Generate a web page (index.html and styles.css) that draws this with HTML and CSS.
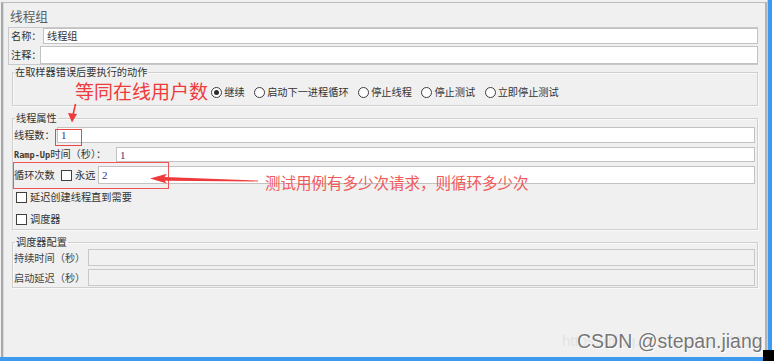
FILE: index.html
```html
<!DOCTYPE html>
<html lang="zh">
<head>
<meta charset="utf-8">
<title>线程组</title>
<link rel="stylesheet" href="styles.css">
</head>
<body>
<div class="screen">
  <div class="main">
    <div class="window">
      <div class="title">线程组</div>
      <div class="namepanel">
        <div class="row name-row"><span class="lbl lbl-name">名称：</span><div class="input in-name">线程组</div></div>
        <div class="row notes-row"><span class="lbl lbl-notes">注释：</span><div class="input in-notes"></div></div>
      </div>
      <fieldset class="fs fs-action">
        <legend>在取样器错误后要执行的动作</legend>
        <div class="radios">
          <span class="opt"><span class="radio on"></span><span class="olbl">继续</span></span>
          <span class="opt"><span class="radio"></span><span class="olbl">启动下一进程循环</span></span>
          <span class="opt"><span class="radio"></span><span class="olbl">停止线程</span></span>
          <span class="opt"><span class="radio"></span><span class="olbl">停止测试</span></span>
          <span class="opt"><span class="radio"></span><span class="olbl">立即停止测试</span></span>
        </div>
      </fieldset>
      <fieldset class="fs fs-thread">
        <legend>线程属性</legend>
        <div class="row r-threads"><span class="lbl lbl-threads">线程数：</span><div class="input"><span class="val">1</span></div></div>
        <div class="row r-ramp"><span class="lbl lbl-ramp"><span class="latin">Ramp-Up</span>时间（秒）：</span><div class="input"><span class="val">1</span></div></div>
        <div class="row r-loop"><span class="lbl lbl-loop">循环次数</span><span class="check"></span><span class="lbl lbl-forever">永远</span><div class="input"><span class="val">2</span></div></div>
        <div class="crow cr-delay"><span class="check"></span><span class="lbl">延迟创建线程直到需要</span></div>
        <div class="crow cr-sched"><span class="check"></span><span class="lbl">调度器</span></div>
      </fieldset>
      <fieldset class="fs fs-sched">
        <legend>调度器配置</legend>
        <div class="row r-dur"><span class="lbl lbl-sched">持续时间（秒）</span><div class="input disabled"></div></div>
        <div class="row r-delay"><span class="lbl lbl-sched">启动延迟（秒）</span><div class="input disabled"></div></div>
      </fieldset>
    </div>
    <div class="edge-gap"></div>
    <div class="edge-blue"></div>
    <div class="edge-white"></div>
  </div>
  <div class="bottom-bar"></div>

  <div class="note note-users">等同在线用户数</div>
  <svg class="arrows" width="774" height="361" viewBox="0 0 774 361">
    <line x1="75.5" y1="104" x2="73" y2="115" stroke="#ee3a3a" stroke-width="1.6"/>
    <polygon points="68,113 77,114 72,122.5" fill="#ee3a3a"/>
    <rect x="55.5" y="129.5" width="26" height="16" fill="none" stroke="#ee4444" stroke-width="1"/>
    <rect x="13.5" y="162.5" width="155" height="26" fill="none" stroke="#ee5555" stroke-width="1"/>
    <polygon points="150,178.5 167,173.8 164.5,177 258,180.6 258,181.4 164.5,180.8 167,183.6" fill="#ee3a3a"/>
  </svg>
  <div class="note note-loop">测试用例有多少次请求，则循环多少次</div>

  <div class="wm-url">https://blog.csdn.net/qq_4350</div>
  <div class="wm">CSDN @stepan.jiang</div>
  <div class="corner"></div>
</div>
</body>
</html>
```

FILE: styles.css
```css
* { box-sizing: border-box; }
html, body { margin: 0; padding: 0; }
body {
  background: #ffffff;
  font-family: "Noto Sans CJK SC", "Noto Sans", sans-serif;
}
.screen {
  position: relative;
  width: 774px;
  height: 361px;
  overflow: hidden;
  background: #f0f0f0;
  display: flex;
  flex-direction: column;
}
.main {
  display: flex;
  height: 357px;
  padding-left: 1px;
}
.window {
  flex: 0 0 766px;
  width: 766px;
  margin-top: 2px;
  border-top: 1px solid #bcbcbc;
  border-left: 2px solid #a9a9a9;
  border-right: 2px solid #b3b3b3;
  box-shadow: inset 1px 0 0 #d8d8d8;
  padding: 4px 7px 0 5px;
  display: flex;
  flex-direction: column;
}
.edge-gap { flex: 0 0 1px; background: #cbcbcb; }
.edge-blue { flex: 0 0 4px; background: #3d9bef; }
.edge-white { flex: 1; background: #ffffff; }
.bottom-bar { height: 4px; background: #3d9bef; }

.title {
  font-size: 12.7px;
  line-height: 17px;
  height: 17px;
  color: #5c5c5c;
  padding-left: 2px;
}

.lbl {
  font-size: 10.2px;
  line-height: 12px;
  color: #333333;
  white-space: nowrap;
  flex: none;
}
.latin {
  font-family: "DejaVu Sans Mono", monospace;
  font-weight: bold;
  font-size: 8.6px;
  color: #3a3a3a;
}
.row {
  display: flex;
  align-items: center;
}
.input {
  flex: 1;
  min-width: 0;
  height: 16px;
  border: 1px solid #c2c2c2;
  background: #ffffff;
  font-size: 10.2px;
  line-height: 14px;
  color: #333333;
  padding-left: 3px;
  display: flex;
  align-items: center;
}
.input.disabled {
  background: #f1f1f1;
  border-color: #c8c8c8;
}
.val {
  font-family: "Liberation Serif", serif;
  font-size: 11px;
  color: #3b3573;
}

/* name / notes panel */
.namepanel {
  margin-top: 3px;
  border-top: 1px solid #c9c9c9;
  border-left: 1px solid #c9c9c9;
  border-bottom: 1px solid #c9c9c9;
  display: flex;
  flex-direction: column;
  gap: 2px;
}
.name-row { height: 16px; }
.notes-row { height: 18px; }
.notes-row .input { height: 18px; }
.lbl-name { width: 34px; padding-left: 2px; }
.lbl-notes { width: 31px; padding-left: 2px; }
.in-name { padding-left: 3px; }

/* fieldsets */
.fs {
  margin: 0 0 0 4px;
  padding: 0;
  min-width: 0;
  border: 1px solid #cfcfcf;
  box-shadow: inset 1px 1px 0 #fafafa, 1px 1px 0 #fafafa;
}
.fs legend {
  font-size: 10.2px;
  line-height: 12px;
  color: #333333;
  padding: 0 1px;
  margin-left: 1px;
}
.fs-action {
  margin-top: 1px;
  padding: 8px 0 7px 0;
}
.radios {
  display: flex;
  justify-content: center;
  align-items: center;
  height: 12px;
}
.opt {
  display: flex;
  align-items: center;
  gap: 2px;
  margin-right: 9.5px;
}
.opt:last-child { margin-right: 0; }
.radio {
  width: 11px;
  height: 11px;
  border: 1px solid #3d3d3d;
  border-radius: 50%;
  background: #ffffff;
  display: flex;
  align-items: center;
  justify-content: center;
}
.radio.on::after {
  content: "";
  width: 5px;
  height: 5px;
  border-radius: 50%;
  background: #2b2b2b;
}
.olbl {
  font-size: 10.2px;
  line-height: 12px;
  color: #333333;
}

.fs-thread {
  margin-top: 6px;
  padding: 3px 2px 3px 1px;
}
.r-threads { height: 16px; }
.r-ramp { height: 15px; margin-top: 4px; }
.r-ramp .input { height: 15px; }
.r-loop { height: 18px; margin-top: 4px; }
.r-loop .input { height: 18px; }
.lbl-threads { width: 43px; }
.lbl-ramp { width: 102px; }
.lbl-loop { width: 47px; }
.lbl-forever { width: 26px; padding-left: 3px; }
.check {
  flex: none;
  width: 11px;
  height: 11px;
  border: 1px solid #3f3f3f;
  background: #ffffff;
}
.crow {
  display: flex;
  align-items: center;
  height: 14px;
  padding-left: 2px;
  gap: 3px;
}
.cr-delay { margin-top: 6px; }
.cr-sched { margin-top: 8px; }

.fs-sched {
  margin-top: 6px;
  padding: 1px 2px 1px 1px;
}
.r-dur, .r-delay { height: 17px; }
.r-dur .input, .r-delay .input { height: 17px; }
.r-delay { margin-top: 3px; }
.lbl-sched { width: 74px; color: #444444; }

/* annotations (drawn over the UI) */
.note {
  position: absolute;
  white-space: nowrap;
  line-height: 1;
  font-family: "Noto Sans CJK SC", sans-serif;
}
.note-users {
  left: 75px;
  top: 81px;
  font-size: 19px;
  color: #ef3b3b;
}
.note-loop {
  left: 265px;
  top: 175px;
  font-size: 15.5px;
  color: #f05a5a;
}
.arrows {
  position: absolute;
  left: 0;
  top: 0;
  pointer-events: none;
}

/* watermark */
.wm-url {
  position: absolute;
  left: 562px;
  top: 333px;
  font-family: "Liberation Sans", sans-serif;
  font-size: 15px;
  line-height: 1;
  color: #e3e3e3;
  white-space: nowrap;
}
.wm {
  position: absolute;
  left: 577px;
  top: 331px;
  font-family: "Liberation Sans", sans-serif;
  font-size: 19.5px;
  line-height: 20px;
  color: #767676;
  white-space: nowrap;
  text-shadow: 1px 1px 0 #ffffff, 0 0 2px #ffffff;
}
.corner {
  position: absolute;
  left: 763px;
  top: 350px;
  width: 11px;
  height: 11px;
  background: #000000;
}
```
